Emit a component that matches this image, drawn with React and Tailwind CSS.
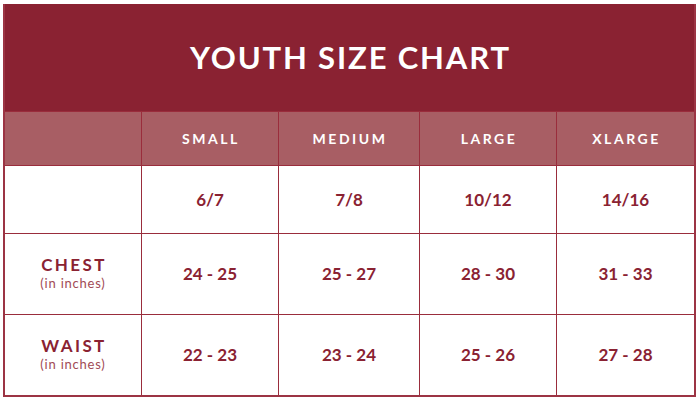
import React from 'react'

const sizes = ['SMALL', 'MEDIUM', 'LARGE', 'XLARGE']
const rows = [
  { label: null, values: ['6/7', '7/8', '10/12', '14/16'], h: 'h-[68px]' },
  { label: 'CHEST', values: ['24 - 25', '25 - 27', '28 - 30', '31 - 33'], h: 'h-[81px]' },
  { label: 'WAIST', values: ['22 - 23', '23 - 24', '25 - 26', '27 - 28'], h: 'h-[81px]' },
]

export default function App() {
  return (
    <div className="w-[700px] h-[401px] bg-white pt-[4px] pl-[3px]" style={{ fontFamily: 'Lato, "Liberation Sans", sans-serif' }}>
      <div className="w-[693px] border-2 border-[#9c3444] border-t-0">
        {/* Title */}
        <div className="h-[107px] bg-[#8a2232] flex items-center justify-center">
          <h1 className="text-white text-[31px] font-bold tracking-[0.06em] pl-[2px]">YOUTH SIZE CHART</h1>
        </div>

        {/* Header row */}
        <div className="grid grid-cols-[136px_137px_141px_137px_1fr] h-[54px] bg-[#a85e64] border-t border-[#9a2d3c]">
          <div />
          {sizes.map((s) => (
            <div key={s} className="border-l border-[#9a2d3c] flex items-center justify-center text-white text-[14px] font-bold tracking-[0.18em] pl-[2px]">
              {s}
            </div>
          ))}
        </div>

        {rows.map((row, i) => (
          <div key={i} className={`grid grid-cols-[136px_137px_141px_137px_1fr] ${row.h} border-t border-[#9a2d3c]`}>
            <div className="flex flex-col items-center justify-center">
              {row.label && (
                <>
                  <span className="text-[#8a2232] text-[17px] font-bold tracking-[0.14em] leading-[20px] pl-[2px]">{row.label}</span>
                  <span className="text-[#a14a55] text-[13px] tracking-[0.06em] leading-[16px] pb-[2px]">(in inches)</span>
                </>
              )}
            </div>
            {row.values.map((v) => (
              <div key={v} className="border-l border-[#9a2d3c] flex items-center justify-center text-[#8a2232] text-[17px] font-bold">
                {v}
              </div>
            ))}
          </div>
        ))}
      </div>
    </div>
  )
}
